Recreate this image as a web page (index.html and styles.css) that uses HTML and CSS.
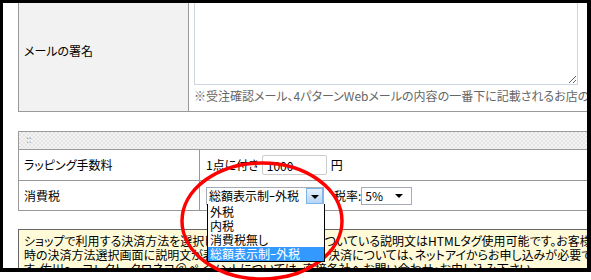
FILE: index.html
```html
<!doctype html>
<html>
<head>
<meta charset="utf-8">
<title>決済設定</title>
<link rel="stylesheet" href="styles.css">
</head>

<body>
	<div class="shot">
		<div class="page">
			<div class="tbl sig">
				<div class="th">メールの署名</div>
				<div class="td">
					<textarea class="area"></textarea>
					<p class="hint">※受注確認メール、4パターンWebメールの内容の一番下に記載されるお店の署名です。</p>
				</div>
			</div>

			<div class="tbl opt">
				<div class="bar">::</div>
				<div class="row">
					<div class="th">ラッピング手数料</div>
					<div class="td">
						<span>1点に付き</span>
						<input type="text" class="txt" value="1000">
						<span>円</span>
					</div>
				</div>
				<div class="row">
					<div class="th">消費税</div>
					<div class="td">
						<div class="sel">
							<span>総額表示制ｰ外税</span>
							<i class="btn"></i>
							<ul class="list">
								<li>外税</li>
								<li>内税</li>
								<li>消費税無し</li>
								<li class="on">総額表示制ｰ外税</li>
							</ul>
						</div>
						<span class="rate">税率:</span>
						<div class="sel small">
							<span>5%</span>
							<i class="arr"></i>
						</div>
					</div>
				</div>
			</div>

			<div class="note">
				ショップで利用する決済方法を選択して下さい。決済方法についている説明文はHTMLタグ使用可能です。お客様が購入<br>
				時の決済方法選択画面に説明文が表示されます。クレジット決済については、ネットアイからお申し込みが必要で<br>
				す。佐川eーコレクト、クロネコ＠ペイメントについては、直接各社へお問い合わせ・お申し込み下さい。
			</div>
		</div>
	</div>

	<svg class="mark" width="591" height="280">
		<ellipse cx="262" cy="221" rx="80" ry="58" fill="none" stroke="#f00" stroke-width="3.5"/>
	</svg>
</body>
</html>
```

FILE: styles.css
```css
*{
	margin: 0;
	padding: 0;
	list-style: none;
	box-sizing: border-box;
}
body{
	width: 591px;
	height: 280px;
	position: relative;
	overflow: hidden;
	background: #fff;
	color: #000;
	font: 12px/16px "Noto Sans CJK JP", sans-serif;
	font-feature-settings: "palt";
}
.shot{
	width: 591px;
	height: 272px;
	border: solid #000;
	border-width: 3px 4px 4px 3px;
	overflow: hidden;
}
.page{
	width: 660px;
	padding-left: 15px;
	margin-top: -14px;
}
.tbl{
	border: 1px solid #999;
}

/* signature */
.sig{
	display: flex;
}
.sig .th{
	width: 170px;
	border-right: 1px solid #999;
	background: #f2f2f2;
	padding-left: 5px;
	display: flex;
	align-items: center;
}
.sig .td{
	flex: 1;
	padding: 4px 5px 7px;
}
.area{
	display: block;
	width: 384px;
	height: 91px;
	border: 1px solid #d0d6de;
	resize: both;
}
.hint{
	margin-top: 3px;
	color: #666;
	white-space: nowrap;
}

/* options */
.opt{
	margin-top: 19px;
}
.bar{
	height: 18px;
	border-bottom: 1px solid #999;
	padding-left: 7px;
	color: #999;
	font-size: 10px;
	line-height: 14px;
	background: repeating-conic-gradient(#e4e4e4 0 25%, #f4f4f4 0 50%) 0 0/4px 4px;
}
.row{
	display: flex;
	height: 31px;
	border-bottom: 1px solid #999;
}
.row:last-child{
	height: 29px;
	border-bottom: 0;
}
.opt .th{
	width: 181px;
	border-right: 1px solid #999;
	padding-left: 5px;
	display: flex;
	align-items: center;
}
.opt .td{
	flex: 1;
	display: flex;
	align-items: center;
	padding-left: 6px;
}
.txt{
	width: 65px;
	height: 20px;
	margin: 0 4px 0 3px;
	padding: 0 4px;
	border: 1px solid #ccc;
	border-radius: 2px;
	font: inherit;
	color: #000;
}
.sel{
	position: relative;
	width: 118px;
	height: 18px;
	border: 1px solid #a5acb5;
	padding-left: 2px;
	display: flex;
	align-items: center;
	background: #fff;
	white-space: nowrap;
}
.btn{
	position: absolute;
	right: 0;
	top: 0;
	bottom: 0;
	width: 17px;
	border: 1px solid #7eb4ea;
	background: linear-gradient(#e6f2fd, #b6d5f5);
}
.btn:after,
.arr:after{
	content: '';
	position: absolute;
	left: 4px;
	top: 6px;
	border: 4px solid transparent;
	border-top: 4px solid #000;
	border-bottom: 0;
}
.arr{
	position: absolute;
	right: 4px;
	top: 0;
	width: 16px;
	height: 16px;
}
.rate{
	margin-left: 10px;
}
.small{
	width: 51px;
	padding-left: 3px;
}
.list{
	position: absolute;
	left: 0;
	top: 100%;
	width: 118px;
	border: 1px solid #000;
	border-top: 0;
	padding-top: 1px;
	background: #fff;
	z-index: 2;
}
.list li{
	height: 14px;
	line-height: 14px;
	padding-left: 2px;
}
.list .on{
	background: #39f;
	color: #fff;
}

/* note */
.note{
	margin-top: 18px;
	border: 1px solid #666;
	background: #fffbd9;
	padding: 4px 5px;
	line-height: 14px;
	white-space: nowrap;
}

.mark{
	position: absolute;
	left: 0;
	top: 0;
}
```
